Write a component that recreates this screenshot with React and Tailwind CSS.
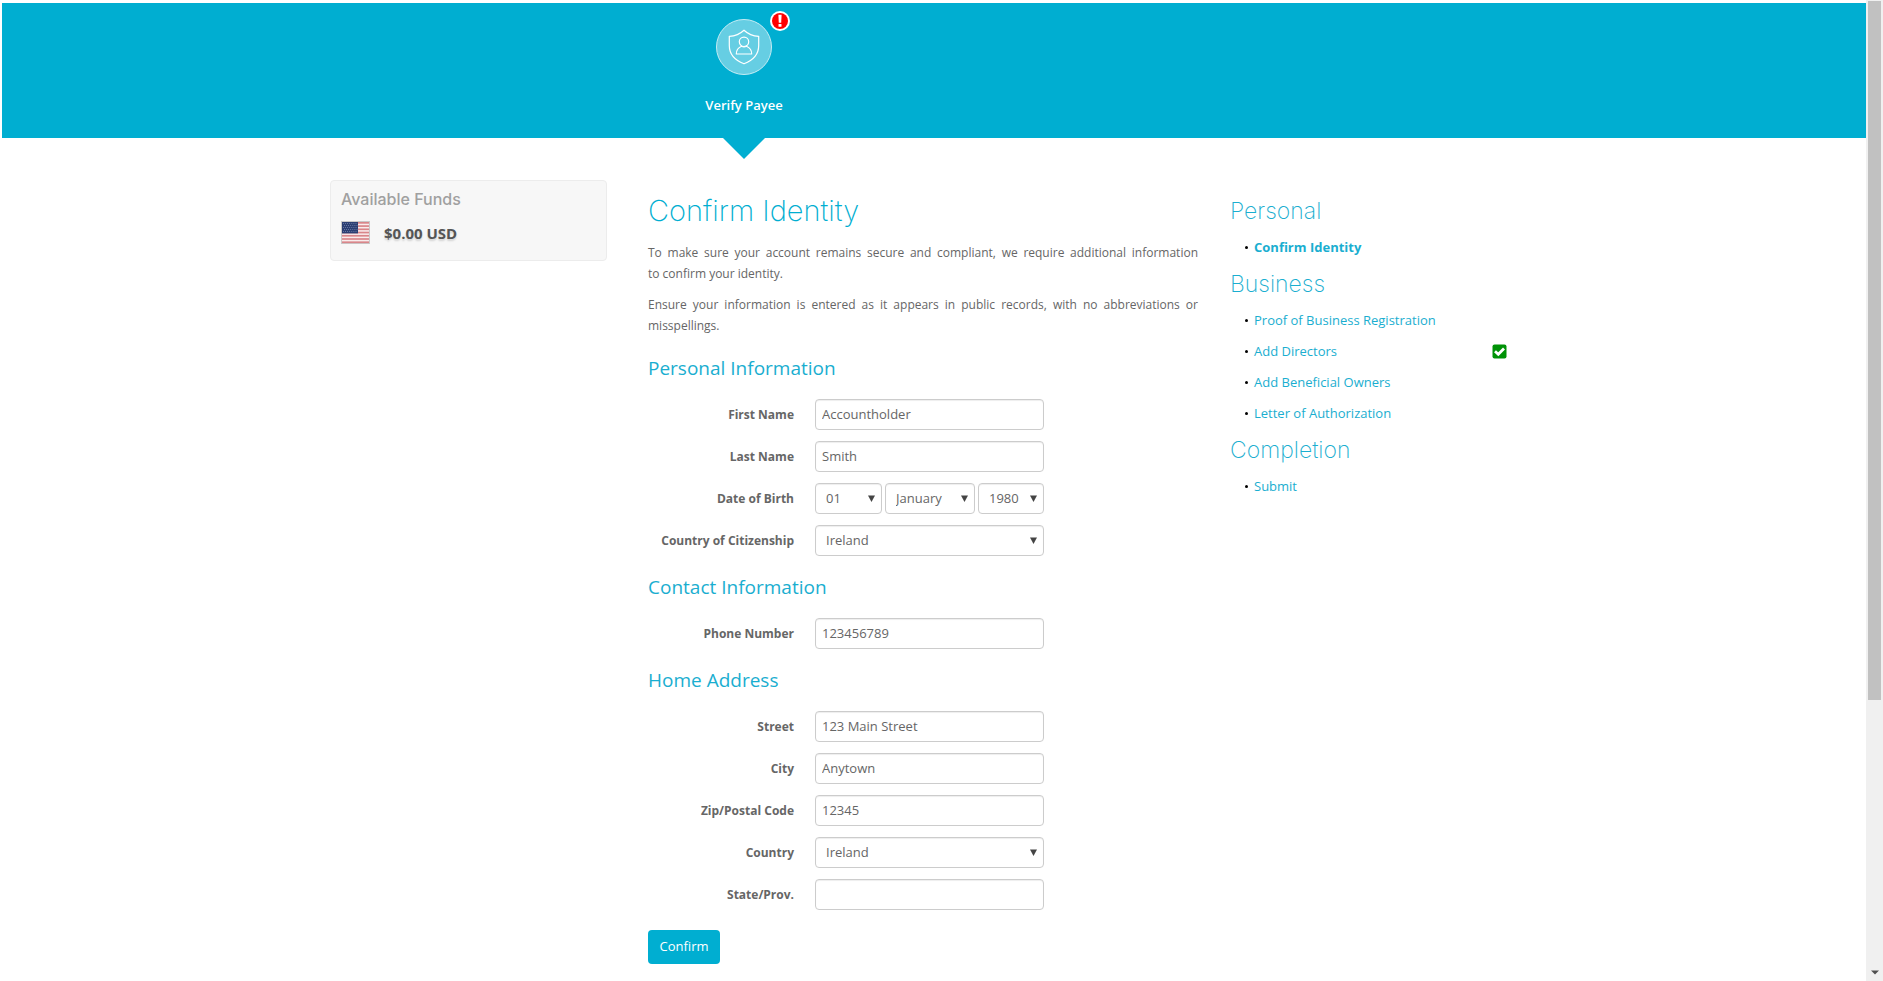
import React from "react";

const DAYS = ["01", "02", "03"];
const MONTHS = ["January", "February", "March"];
const YEARS = ["1980", "1981", "1982"];
const COUNTRIES = ["Ireland", "United States"];

const SECTIONS = [
  {
    title: "Personal Information",
    fields: [
      { id: "first-name", label: "First Name", value: "Accountholder" },
      { id: "last-name", label: "Last Name", value: "Smith" },
      { id: "birth-day", label: "Date of Birth", kind: "date" },
      { id: "citizenship", label: "Country of Citizenship", kind: "select" },
    ],
  },
  {
    title: "Contact Information",
    fields: [{ id: "phone", label: "Phone Number", value: "123456789" }],
  },
  {
    title: "Home Address",
    fields: [
      { id: "street", label: "Street", value: "123 Main Street" },
      { id: "city", label: "City", value: "Anytown" },
      { id: "zip", label: "Zip/Postal Code", value: "12345" },
      { id: "country", label: "Country", kind: "select" },
      { id: "state", label: "State/Prov.", value: "" },
    ],
  },
];

const STEPS = [
  { title: "Personal", items: [{ name: "Confirm Identity", current: true }] },
  {
    title: "Business",
    items: [
      { name: "Proof of Business Registration" },
      { name: "Add Directors", done: true },
      { name: "Add Beneficial Owners" },
      { name: "Letter of Authorization" },
    ],
  },
  { title: "Completion", items: [{ name: "Submit" }] },
];

function ShieldIcon() {
  return (
    <svg viewBox="0 0 32 36" className="h-9 w-8" fill="none" stroke="#fff" strokeWidth="1.2" strokeLinejoin="round" aria-hidden="true">
      <path d="M16 1.2C12.500 4.500 7 7 1.300 7.300V16.500C1.300 25.500 7.500 31.500 16 34.800C24.500 31.500 30.700 25.500 30.700 16.500V7.300C25 7 19.500 4.500 16 1.200Z" />
      <circle cx="16" cy="12.800" r="4.700" />
      <path d="M8.300 25C8.300 20.800 10.800 18.300 13.500 17.200C15 18 17 18 18.500 17.200C21.200 18.300 23.700 20.800 23.700 25Z" />
    </svg>
  );
}

function AlertBadge() {
  return (
    <svg viewBox="0 0 20 20" className="absolute -top-[9px] -right-[19px] size-5" aria-hidden="true">
      <circle cx="10" cy="10" r="10" fill="#fff" />
      <circle cx="10" cy="10" r="8" fill="#f00" />
      <path d="M8.400 3.700H11.600L11.200 11.800H8.800Z" fill="#fff" />
      <rect x="8.500" y="13" width="3" height="2.800" rx="0.600" fill="#fff" />
    </svg>
  );
}

function FlagIcon() {
  const stars = [];
  for (let row = 0; row < 5; row++) {
    for (let col = 0; col < 7; col++) {
      stars.push(<rect key={row + "-" + col} x={2 + col * 2.1 + (row % 2)} y={2 + row * 2} width="0.8" height="0.8" fill="#8794b8" />);
    }
  }
  return (
    <svg viewBox="0 0 29 23" className="h-[23px] w-[29px]" aria-label="United States flag" role="img">
      <rect width="29" height="23" fill="#c9c9c9" />
      <rect x="1" y="1" width="27" height="21" fill="#f9ecec" />
      {[0, 1, 2, 3, 4, 5, 6].map((i) => (
        <rect key={i} x="1" y={1 + i * 3.23} width="27" height="1.7" fill="#d9868a" />
      ))}
      <rect x="1" y="1" width="16" height="11.400" fill="#2b3f73" />
      {stars}
    </svg>
  );
}

function CheckIcon() {
  return (
    <svg viewBox="0 0 15 15" className="size-[15px]" role="img" aria-label="Completed">
      <rect x="0.500" y="0.500" width="14" height="14" rx="2" fill="#009207" />
      <path d="M3 7.300L6.300 10.300L12 4.600" fill="none" stroke="#fff" strokeWidth="2.800" />
    </svg>
  );
}

function Select({ id, label, options, className }) {
  return (
    <div className={"relative " + className}>
      <select
        id={id}
        aria-label={label}
        className="h-[31px] w-full appearance-none rounded border border-[#ccc] bg-white pr-5 pl-2.5 text-[#666] shadow-[inset_0_1px_1px_rgba(0,0,0,0.07)]"
      >
        {options.map((option) => (
          <option key={option}>{option}</option>
        ))}
      </select>
      <svg viewBox="0 0 7 7" className="pointer-events-none absolute top-3 right-[7px] size-[7px]" aria-hidden="true">
        <path d="M0 0.500H7L3.500 7Z" fill="#444" />
      </svg>
    </div>
  );
}

function Control({ field }) {
  if (field.kind === "date") {
    return (
      <div className="flex w-[229px] gap-[3px]">
        <Select id={field.id} options={DAYS} className="w-[67px]" />
        <Select id="birth-month" label="Month of birth" options={MONTHS} className="w-[90px]" />
        <Select id="birth-year" label="Year of birth" options={YEARS} className="flex-1" />
      </div>
    );
  }
  if (field.kind === "select") {
    return <Select id={field.id} options={COUNTRIES} className="w-[229px]" />;
  }
  return (
    <input
      id={field.id}
      type="text"
      defaultValue={field.value}
      className="h-[31px] w-[229px] rounded border border-[#ccc] bg-white px-1.5 pb-0.5 text-[#666] shadow-[inset_0_1px_1px_rgba(0,0,0,0.07)]"
    />
  );
}

function Header() {
  return (
    <header className="mt-[3px] h-[135px] bg-[#00aed1]">
      <div className="mx-auto max-w-[1208px]">
        <a href="#verify" className="relative ml-[334px] flex h-[135px] w-40 flex-col items-center pt-4 text-white">
          <span className="relative flex size-14 items-center justify-center rounded-full border border-[#c5ecf4] bg-[#66cee3]">
            <ShieldIcon />
            <AlertBadge />
          </span>
          <span className="mt-5 leading-5 font-semibold">Verify Payee</span>
          <svg viewBox="0 0 42 21" className="absolute top-full left-1/2 h-[21px] w-[42px] -translate-x-1/2" aria-hidden="true">
            <path d="M0 0H42L21 21Z" fill="#00aed1" />
          </svg>
        </a>
      </div>
    </header>
  );
}

function Scrollbar() {
  return (
    <div className="flex w-[17px] shrink-0 flex-col items-center justify-between bg-[#f0f0f0] px-0.5 pt-px pb-1.5" aria-hidden="true">
      <div className="h-[calc(72%-2px)] w-[13px] bg-[#c1c1c1]" />
      <svg viewBox="0 0 8 5" className="h-[5px] w-2">
        <path d="M0 0.500H8L4 4.500Z" fill="#505050" />
      </svg>
    </div>
  );
}

export default function App() {
  return (
    <div className="flex min-h-screen bg-white font-['Open_Sans','Noto_Sans',sans-serif] text-[13px] text-[#666]">
      <div className="min-w-0 flex-1 pl-0.5">
        <Header />
        <main className="mx-auto flex max-w-[1208px] items-start pb-3">
          <section className="mt-[42px] h-[81px] w-[277px] rounded border border-[#ececec] bg-[#f7f7f7] px-2.5 pt-2">
            <h2 className="font-['Inter',sans-serif] text-base leading-5 font-medium text-[#a0a0a0]">Available Funds</h2>
            <div className="mt-3 flex items-center gap-3.5">
              <FlagIcon />
              <span className="text-[15px] leading-5 font-bold text-[#555] [text-shadow:0_2px_2px_rgba(0,0,0,0.15)]">$0.00 USD</span>
            </div>
          </section>

          <form className="mt-[52px] ml-[41px] w-[550px]" onSubmit={(event) => event.preventDefault()}>
            <h1 className="font-['Inter',sans-serif] text-[29px] leading-[42px] font-extralight text-[#00aed1]">Confirm Identity</h1>
            <div className="mt-2.5 space-y-2.5 pb-px text-justify text-xs leading-[21px]">
              <p>
                To make sure your account remains secure and compliant, we require additional information
                {" to\u00a0confirm your identity."}
              </p>
              <p>
                Ensure your information is entered as it appears in public records, with no abbreviations or
                misspellings.
              </p>
            </div>
            {SECTIONS.map((section) => (
              <fieldset key={section.title}>
                <legend className="text-[19px] leading-[62px] text-[#1aaed0]">{section.title}</legend>
                <div className="space-y-[11px]">
                  {section.fields.map((field) => (
                    <div key={field.id} className="flex items-center gap-[21px]">
                      <label htmlFor={field.id} className="w-[146px] text-right text-xs font-bold">
                        {field.label}
                      </label>
                      <Control field={field} />
                    </div>
                  ))}
                </div>
              </fieldset>
            ))}
            <button type="submit" className="mt-5 h-[34px] w-[72px] rounded bg-[#00aed1] text-white">
              Confirm
            </button>
          </form>

          <nav className="mt-[52px] ml-8 w-[277px]" aria-label="Verification steps">
            {STEPS.map((step) => (
              <section key={step.title}>
                <h2 className="font-['Inter',sans-serif] text-[23px] leading-[42px] font-extralight text-[#1aaed0]">{step.title}</h2>
                <ul>
                  {step.items.map((item) => (
                    <li key={item.name} className="flex h-[31px] items-center pl-[15px]">
                      <span className="mr-1.5 size-[3px] rounded-full bg-black" />
                      <a href="#step" className={item.current ? "flex-1 font-bold text-[#1aaed0]" : "flex-1 text-[#1aaed0]"}>
                        {item.name}
                      </a>
                      {item.done && <CheckIcon />}
                    </li>
                  ))}
                </ul>
              </section>
            ))}
          </nav>
        </main>
      </div>
      <Scrollbar />
    </div>
  );
}
